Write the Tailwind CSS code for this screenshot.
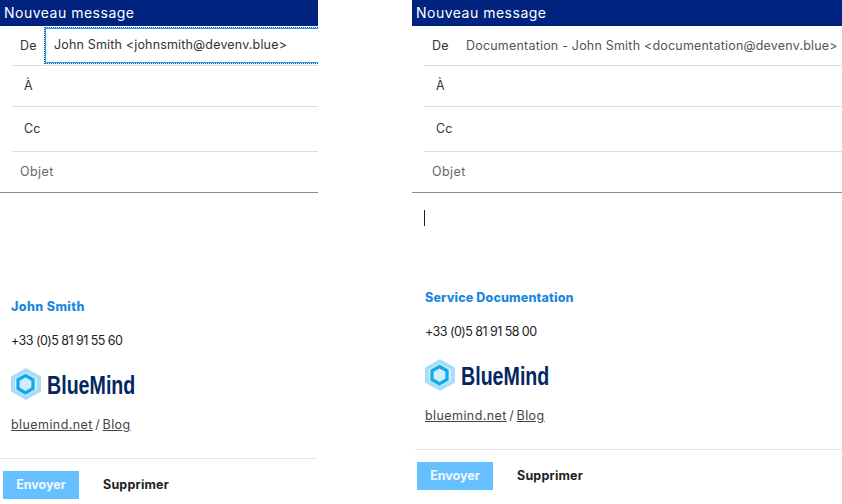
<!DOCTYPE html>
<html lang="fr"><head><meta charset="utf-8"><title>Nouveau message</title>
<script src="https://cdn.jsdelivr.net/npm/@tailwindcss/browser@4"></script></head>
<body class="bg-white w-[842px] h-[504px] overflow-hidden font-['Inter',sans-serif] text-[12.5px] text-[#333]">
<div class="flex gap-[94px]">
<!-- left -->
<section class="w-[318px] shrink-0 overflow-hidden">
  <header class="h-[26px] bg-[#00237f] text-white text-[14px] leading-[26px] pl-1 tracking-[0.5px]">Nouveau message</header>
  <div class="pl-3">
    <div class="h-[40px] border-b border-[#dedede] flex items-center pt-[2px]">
      <span class="w-[33px] pl-2 shrink-0 tracking-[0.3px]">De</span>
      <div class="w-[290px] shrink-0 h-[35px] -mt-[2px] border border-[#2a96e6] outline outline-dotted outline-[#14609c] shadow-[0_0_3px_#a9def7] bg-white pl-2 flex items-center tracking-[0.17px]">John Smith &lt;johnsmith@devenv.blue&gt;</div>
    </div>
    <div class="h-[41px] border-b border-[#dedede] flex items-center pl-3">À</div>
    <div class="h-[45px] border-b border-[#dedede] flex items-center pl-3">Cc</div>
  </div>
  <div class="h-[41px] border-b border-[#8c8c8c] flex items-center pl-5 text-[#666] tracking-[0.4px]">Objet</div>
  <div class="h-[265px] pl-[11px] pt-[106px]">
    <p class="font-extrabold text-[#1b87de] leading-[15px] tracking-[0.4px]">John Smith</p>
    <p class="mt-[19px] leading-[15px] text-[#222] tracking-[-0.55px]">+33 (0)5 81 91 55 60</p>
    <div class="mt-[20px] h-[32px] flex items-center gap-[6px]">
      <svg class="w-[30px] h-[32px]" viewBox="0 0 30 32"><path fill="#a9def7" d="M15 0 30 8.500V23.500L15 32 0 23.500V8.500Z"/><path fill="#fff" d="M15 4.500 26 10.500V21.500L15 27.500 4 21.500V10.500Z" opacity=".45"/><path fill="none" stroke="#12a8ea" stroke-width="3.200" d="M14.500 7.500 22 11.800V20.500L14.500 24.800 7 20.500V11.800Z"/></svg>
      <span class="font-['Liberation_Sans',sans-serif] font-bold text-[25px] leading-none text-[#05265f] w-[88px] whitespace-nowrap origin-left scale-x-[0.785] pt-[2px]">BlueMind</span>
    </div>
    <p class="mt-[17px] leading-[15px] text-[#444] tracking-[0.42px]"><span class="underline">bluemind.net</span><span class="mx-[-1.5px]"> / </span><span class="underline">Blog</span></p>
  </div>
  <footer class="border-t border-[#e4e4e4] w-[317px] pl-[3px] pt-3 flex items-center font-bold">
    <span class="w-[76px] h-[28px] bg-[#66bfff] text-white/90 flex items-center justify-center">Envoyer</span>
    <span class="ml-6 text-[#222] tracking-[0.2px]">Supprimer</span>
  </footer>
</section>
<!-- right -->
<section class="flex-1 overflow-hidden">
  <header class="h-[26px] bg-[#00237f] text-white text-[14px] leading-[26px] pl-1 tracking-[0.5px]">Nouveau message</header>
  <div class="pl-3">
    <div class="h-[40px] border-b border-[#dedede] flex items-center pt-[2px]">
      <span class="w-[42px] pl-2 shrink-0 tracking-[0.3px]">De</span>
      <span class="text-[#555] whitespace-nowrap tracking-[0.2px]">Documentation - John Smith &lt;documentation@devenv.blue&gt;</span>
    </div>
    <div class="h-[41px] border-b border-[#dedede] flex items-center pl-3">À</div>
    <div class="h-[45px] border-b border-[#dedede] flex items-center pl-3">Cc</div>
  </div>
  <div class="h-[41px] border-b border-[#8c8c8c] flex items-center pl-5 text-[#666] tracking-[0.4px]">Objet</div>
  <div class="h-[256px] pl-[13px] pt-[17px]">
    <div class="h-[16px] w-px bg-[#222] -ml-px"></div>
    <p class="mt-[64px] font-extrabold text-[#1b87de] leading-[15px] tracking-[0.15px]">Service Documentation</p>
    <p class="mt-[19px] leading-[15px] text-[#222] tracking-[-0.55px]">+33 (0)5 81 91 58 00</p>
    <div class="mt-[20px] h-[32px] flex items-center gap-[6px]">
      <svg class="w-[30px] h-[32px]" viewBox="0 0 30 32"><path fill="#a9def7" d="M15 0 30 8.500V23.500L15 32 0 23.500V8.500Z"/><path fill="#fff" d="M15 4.500 26 10.500V21.500L15 27.500 4 21.500V10.500Z" opacity=".45"/><path fill="none" stroke="#12a8ea" stroke-width="3.200" d="M14.500 7.500 22 11.800V20.500L14.500 24.800 7 20.500V11.800Z"/></svg>
      <span class="font-['Liberation_Sans',sans-serif] font-bold text-[25px] leading-none text-[#05265f] w-[88px] whitespace-nowrap origin-left scale-x-[0.785] pt-[2px]">BlueMind</span>
    </div>
    <p class="mt-[17px] leading-[15px] text-[#444] tracking-[0.42px]"><span class="underline">bluemind.net</span><span class="mx-[-1.5px]"> / </span><span class="underline">Blog</span></p>
  </div>
  <footer class="border-t border-[#e4e4e4] ml-[3px] pl-[2px] pt-3 flex items-center font-bold">
    <span class="w-[76px] h-[28px] bg-[#66bfff] text-white/90 flex items-center justify-center">Envoyer</span>
    <span class="ml-6 text-[#222] tracking-[0.2px]">Supprimer</span>
  </footer>
</section>
</div>
</body></html>
